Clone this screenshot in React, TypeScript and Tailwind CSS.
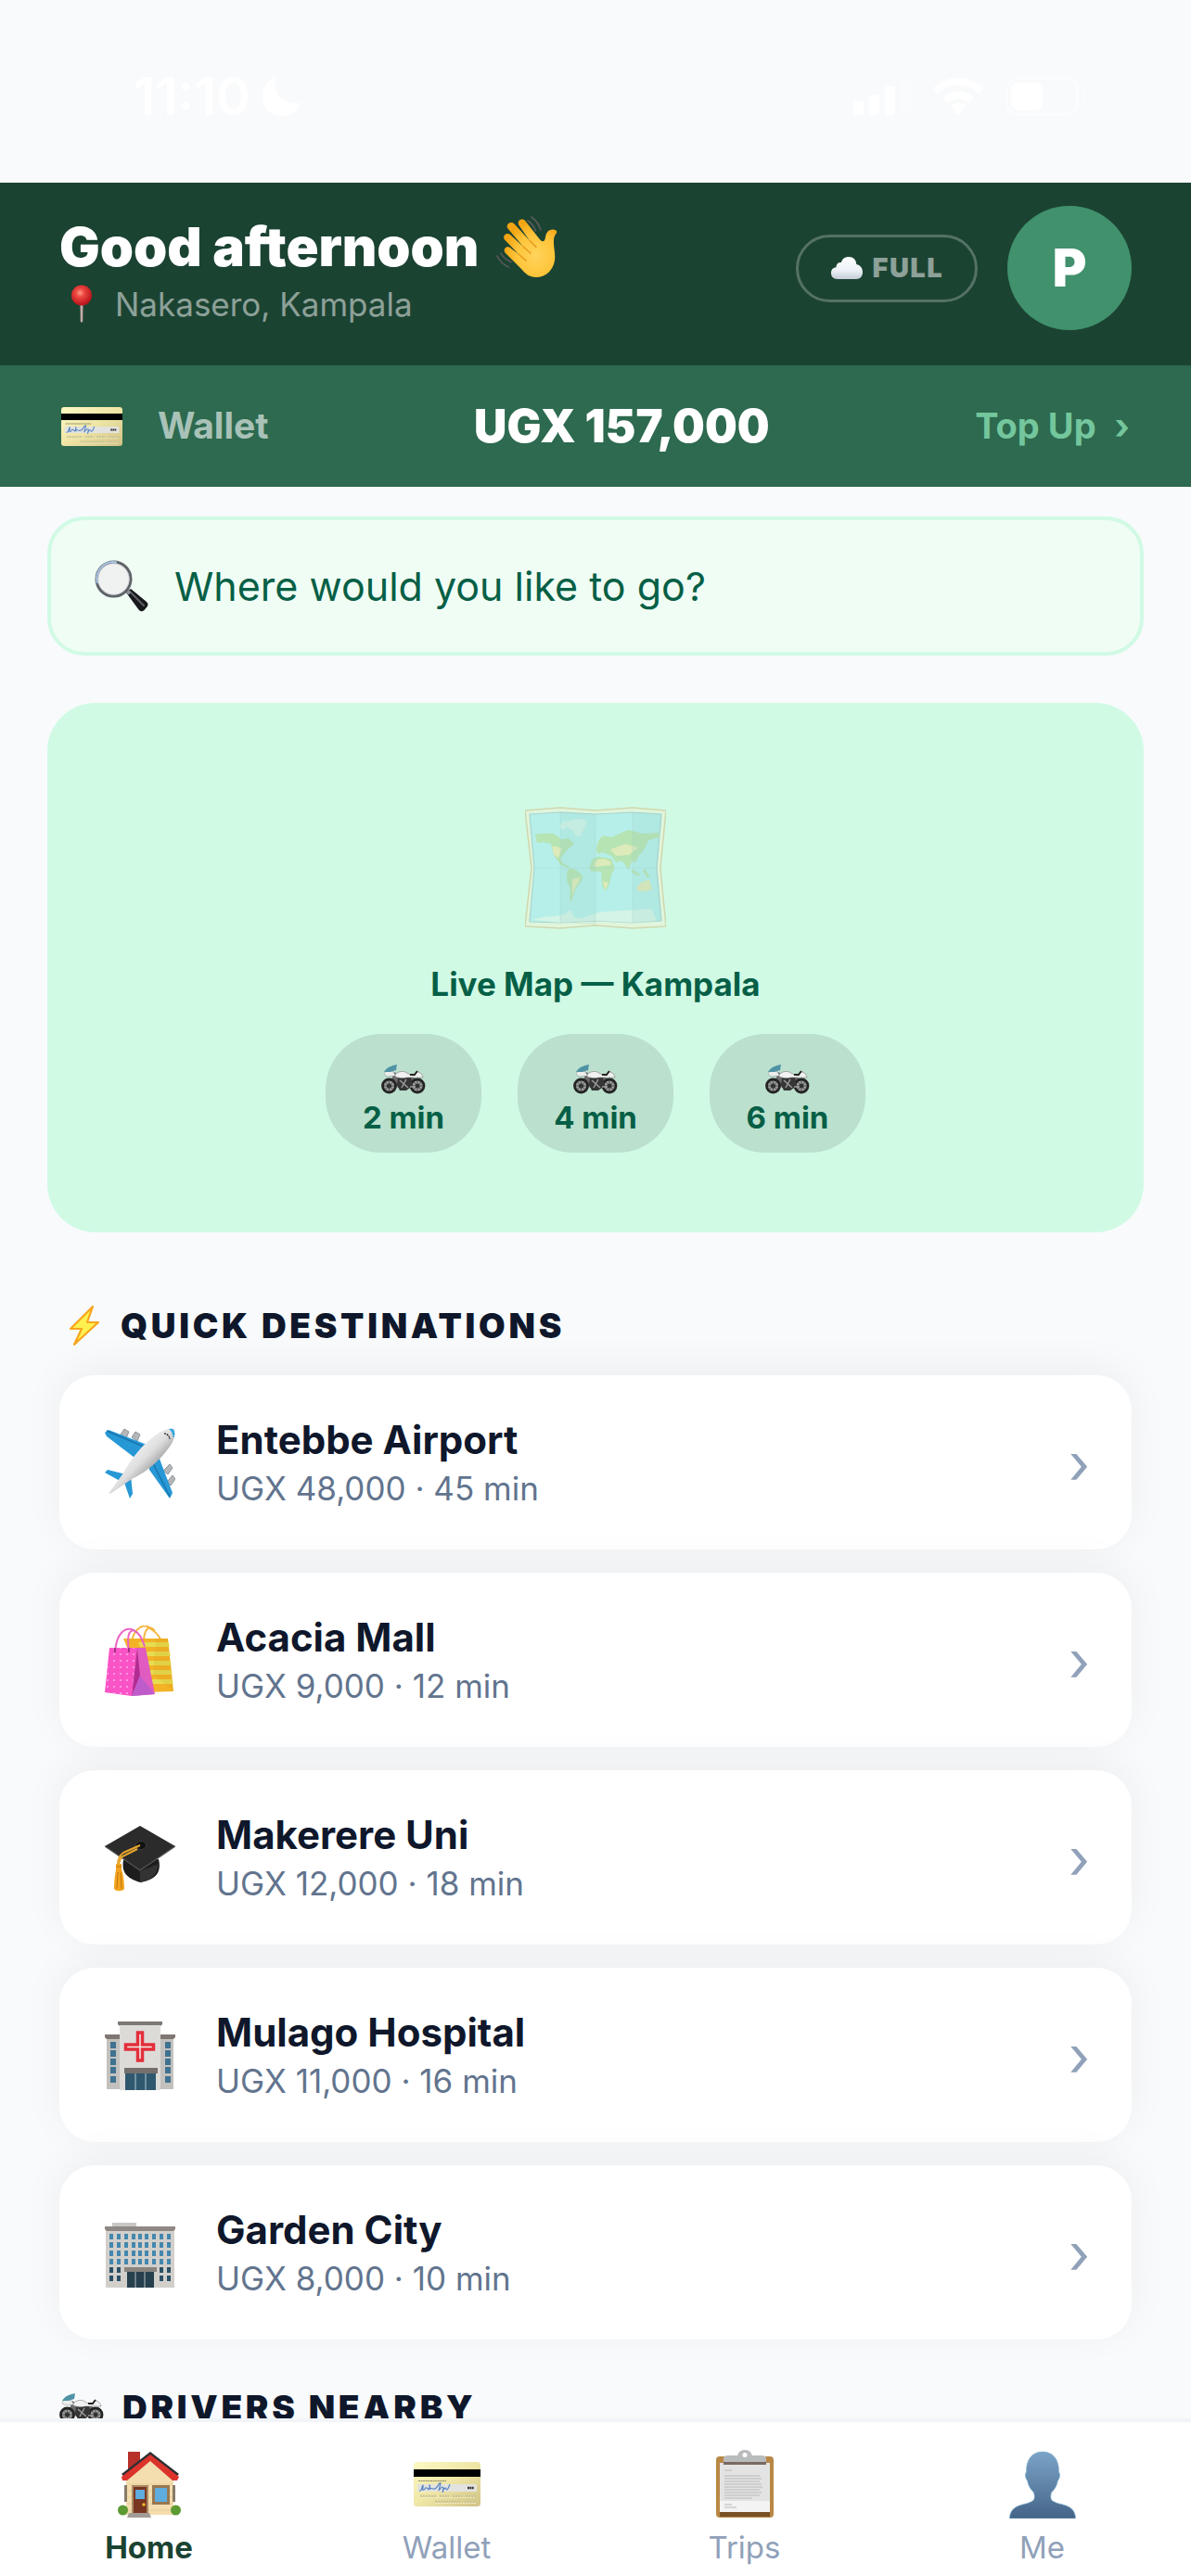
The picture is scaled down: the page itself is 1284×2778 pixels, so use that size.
import { useId, type ReactNode } from "react";

type IconProps = { className?: string };

function WaveIcon({ className }: IconProps) {
  const id = useId();
  return (
    <svg viewBox="0 0 68 68" className={className} aria-hidden="true">
      <defs>
        <radialGradient id={id} cx="0.6" cy="0.62" r="0.6">
          <stop offset="0" stopColor="#ffd35c" />
          <stop offset="0.6" stopColor="#ffc53a" />
          <stop offset="1" stopColor="#f3a413" />
        </radialGradient>
      </defs>
      <path
        fill={`url(#${id})`}
        d="M10 41c-3-3-0.500-8 4-6.500L24 42 9 26.500c-3-4 2-8.500 6-5.500L29 34 12.500 14.500c-3-4.500 3-9 7-5L36 27.500 24.500 11c-3-5 3.500-9 7-4.500L46 25c3 4 6 5 7-1 .8-5 3-8.500 8-8.500 3.500 0 5.500 2 3.500 4.500-2.500 3-2.500 6-2.500 10 0 6 2 12 1 19-2 11-10 18-20 18-7 0-12-4-16-9z"
      />
      <path d="M24 42l8 7M29 34l8 7M36 27.500l7 7" fill="none" stroke="#e79a1d" strokeWidth="1.500" strokeLinecap="round" />
      <path
        d="M38 2c4 3 8 8 10 14M34 6c3 2 7 6 8.500 11M5 41c2 4 7 8 11 9.500M0.800 44c3 6 8 10 12.500 12"
        fill="none"
        stroke="#5b5a5c"
        strokeWidth="1.600"
        strokeLinecap="round"
      />
    </svg>
  );
}

function PinIcon({ className }: IconProps) {
  const id = useId();
  return (
    <svg viewBox="0 0 24 42" className={className} aria-hidden="true">
      <defs>
        <radialGradient id={id} cx="0.42" cy="0.38" r="0.6">
          <stop offset="0" stopColor="#ff9a85" />
          <stop offset="0.350" stopColor="#ee4640" />
          <stop offset="1" stopColor="#b9151c" />
        </radialGradient>
      </defs>
      <path d="M10.300 20h3.400l-.4 20q-1.300 1.500-2.600 0z" fill="#a58d88" />
      <path d="M11.400 20h1v20h-1z" fill="#dccdc8" />
      <circle cx="12" cy="11.500" r="11" fill={`url(#${id})`} />
    </svg>
  );
}

function CloudIcon({ className }: IconProps) {
  const id = useId();
  return (
    <svg viewBox="0 0 36 26" className={className} aria-hidden="true">
      <defs>
        <linearGradient id={id} x1="0" y1="0" x2="0" y2="1">
          <stop offset="0" stopColor="#ffffff" />
          <stop offset="0.600" stopColor="#eef2f7" />
          <stop offset="1" stopColor="#c3ccd8" />
        </linearGradient>
      </defs>
      <path
        fill={`url(#${id})`}
        d="M8 25C3 25 1 22 1 18.500 1 15 3 12.500 6.500 12.300 6.500 8 9.500 6.500 12 7c1-4 4-6 8-6 5 0 8 3 8.300 8C32.500 10 35 13 35 17.500 35 22 32.500 25 28 25z"
      />
    </svg>
  );
}

function CardIcon({ className }: IconProps) {
  const id = useId();
  return (
    <svg viewBox="0 0 72 48" className={className} aria-hidden="true" preserveAspectRatio="none">
      <defs>
        <linearGradient id={id} x1="0" y1="0" x2="1" y2="1">
          <stop offset="0" stopColor="#fdf9c4" />
          <stop offset="0.500" stopColor="#efe6a6" />
          <stop offset="1" stopColor="#cfc285" />
        </linearGradient>
      </defs>
      <rect y="0" width="72" height="48" rx="3.500" fill={`url(#${id})`} />
      <rect y="8" width="72" height="8" fill="#000" />
      <path d="M5 20.500h30" stroke="#8d8663" strokeWidth="1.200" strokeDasharray="2 0.600" />
      <rect x="4" y="24" width="64" height="8" fill="#e2e3df" />
      <path
        d="M6 31c3 1 3-6 4-6 1 3-2 6 1 5 2-1 1-3 3-2s1 3 3 0c0-5 1-4 0 2 1-3 3-1 4-1 5 1 6-8 8-6l-2 8c2-3 4-5 5-3l-1 5c1-4 3-6 4-4 1 3 3-2 4-5"
        fill="none"
        stroke="#5b86c6"
        strokeWidth="1.200"
      />
      <path d="M58 28h7" stroke="#333" strokeWidth="2.500" strokeDasharray="1.900 0.500" />
      <path d="M7 37h17M28 37h10M42 37h10M56 37h11M23 43h28M55 43h12" stroke="#cdc495" strokeWidth="3" strokeDasharray="2 1" />
      <path d="M7 38.500h60M23 44.500h44" stroke="#fbf6cd" strokeWidth="0.800" strokeDasharray="2 1" />
    </svg>
  );
}

function SearchIcon({ className }: IconProps) {
  return (
    <svg viewBox="0 0 58 56" className={className} aria-hidden="true">
      <path d="M34 35l5-4 17 14c2 2 2 4 0 6l-2.500 3c-2 1.800-4 1.800-6-.5z" fill="#17181b" />
      <path d="M38 34l15 15" stroke="#5d6067" strokeWidth="2" strokeLinecap="round" />
      <path d="M33 32l5 4" stroke="#8d9098" strokeWidth="4" />
      <circle cx="20.500" cy="20.500" r="18.500" fill="#f0f2f2" stroke="#5f6368" strokeWidth="3" />
      <path d="M3 25A18 18 0 0 1 24 2.500" fill="none" stroke="#a9c6e8" strokeWidth="2" />
      <circle cx="20.500" cy="20.500" r="16.700" fill="none" stroke="#c4c8cc" strokeWidth="0.800" />
    </svg>
  );
}

function MapIcon({ className }: IconProps) {
  return (
    <svg viewBox="0 0 152 132" className={className} aria-hidden="true">
      <path d="M0 4L38 1l38 3 40-3 36 3-6 62 6 63-36 2-40-3-38 3-38-2 7-63z" fill="#f4efcf" stroke="#d0a45c" strokeWidth="1.500" />
      <path d="M5 8l33-2 38 2 40-2 31 2-5 58 5 57-31 2-40-2-38 2-33-1 5-58z" fill="#8fdff0" stroke="#6f9fae" strokeWidth="1.200" />
      <g fill="#f3f1e4">
        <path d="M46 16c8-4 14-3 20-1 2 5-4 9-6 17l-6-1c-1-6-5-6-8-8z" opacity="0.600" />
        <path d="M8 122c10-5 26-3 34-6l8-5 2 7c6 4 10 2 18-1 10-5 24-4 34-5l32-2 6 13-26 2-40-2-38 2z" opacity="0.700" />
        <path d="M36 22l6-7 8 2-8 8z" opacity="0.600" />
      </g>
      <g fill="#8fc46b">
        <path d="M11 30c8-2 14-1 20-1l8 6 8-1 6 6-8 7c-2 4-6 6-7 10l4 5 6 2-2 2-8-4-7-10-3-12-8-2-7 1z" />
        <path d="M47 67c6-2 12 4 15 8 0 8-8 10-9 19l-4 9c-2-8 1-12-1-17-4-7-4-12-1-19z" />
        <path d="M70 68c0-9 3-14 10-14l13 2c2 5 4 8 3 12-5 6-3 16-9 22-5-1-4-10-5-20-5-1-9 1-12-2z" />
        <path d="M77 47c0-7 3-12 7-16l9 2 18-8 16 4 17-1 1 5-12 3c-3 7-4 11-10 16l-4 8-4-1-3 9-8-10-6 2-5-7-9-4-5 2z" />
        <path d="M115 69l8 5M128 68l5 8" stroke="#8fc46b" strokeWidth="3" />
      </g>
      <g fill="#f0d47a">
        <path d="M30 42l10 3-4 10c-6-2-7-7-6-13z" />
        <path d="M51 78l8-2c0 8-6 8-8 22z" />
        <path d="M74 62c4-7 11-8 19-2l-1 3-17 2zM84 80l6 2-4 8z" />
        <path d="M92 46l16-6 14 4-10 8-14 1zM121 86c4-5 10-7 13-7l3 10-6 2-10 0z" />
      </g>
      <path d="M38 5l38 3v119l-38-2zM116 6l31 2-5 58 5 57-31 2z" fill="#2e6f86" opacity="0.150" />
      <path d="M38 5v120M76 7v119M116 6v119M9 66h133" stroke="#5e8f9c" strokeWidth="1" opacity="0.300" />
    </svg>
  );
}

function MotorbikeIcon({ className }: IconProps) {
  return (
    <svg viewBox="0 0 48 32" className={className} aria-hidden="true">
      <path d="M9 22L14 8l6 4 14-1 5 11-8 3H19z" fill="#6b6b6b" />
      <g fill="#9a9c9d" stroke="#242424" strokeWidth="2.800">
        <circle cx="8.500" cy="23" r="7" />
        <circle cx="39" cy="23" r="7" />
      </g>
      <g fill="none" stroke="#444" strokeWidth="0.800">
        <path d="M3 23h11M8.500 17.500v11M4.500 19l8 8M12.500 19l-8 8M33.500 23h11M39 17.500v11M35 19l8 8M43 19l-8 8" />
      </g>
      <circle cx="8.500" cy="23" r="2.600" fill="#333" />
      <circle cx="39" cy="23" r="2.600" fill="#333" />
      <path d="M18 14h14l2 9-7 5h-7l-3-6z" fill="#353535" />
      <path d="M20 17l9 8M27 16l-5 9M31 24h6" stroke="#9c9c9c" strokeWidth="1.500" />
      <path d="M3 11c0-3 4-5 9-4l4 5-9 1z" fill="#eceded" stroke="#888" strokeWidth="0.500" />
      <path d="M15 11c3-4 10-5 14-1l6 2 2-4 3 0c3 1 5 4 5 6l-17 0c-4 1-9 1-13-1z" fill="#f1f1f1" stroke="#777" strokeWidth="0.600" />
      <path d="M31 11l5 0 3-4" fill="none" stroke="#222" strokeWidth="1.800" />
      <path d="M3 8C6 3 11 1 17 0l-1 6-6 2z" fill="#4f93a5" />
    </svg>
  );
}

function BoltIcon({ className }: IconProps) {
  return (
    <svg viewBox="0 0 34 46" className={className} aria-hidden="true">
      <path d="M26 2L2 26h12L6 43l26-24H20z" fill="#fff04f" stroke="#f9a51e" strokeWidth="2.200" strokeLinejoin="round" />
    </svg>
  );
}

function PlaneIcon({ className }: IconProps) {
  const id = useId();
  return (
    <svg viewBox="0 0 76 76" className={className} aria-hidden="true">
      <defs>
        <linearGradient id={id} x1="0.300" y1="0.300" x2="0.700" y2="0.700">
          <stop offset="0" stopColor="#f5f5f5" />
          <stop offset="0.500" stopColor="#dedede" />
          <stop offset="1" stopColor="#8d8d8d" />
        </linearGradient>
      </defs>
      <g fill="#b4b7b9" stroke="#808487" strokeWidth="0.800">
        <path d="M17 7l4-6 5 3-3 7zM29 10l4-6 5 3-3 7zM63 46l7-7 3 4-5 7zM67 58l6-7 3 4-5 7z" />
      </g>
      <path d="M0 5l4-3 44 17-12 16L2 9z" fill="#2798d6" />
      <path d="M48 36l9-8 16 42-3 6L48 45z" fill="#2798d6" />
      <path d="M0 48l3-3 20 5-5 8zM20 56l8-5 2 20-3 5z" fill="#2798d6" />
      <path d="M2 3l42 18M70 74L52 38" stroke="#1974ad" strokeWidth="1.500" />
      <path d="M57 6c7-5 14-6 17-5 3 4 1 12-4 19C60 34 45 48 29 55L6 71c-2 0-1-2 0-3l13-18C28 33 42 16 57 6z" fill={`url(#${id})`} />
      <path d="M69 1c4-1 6 0 6 3 1 3 0 5-1 7-1-5-2-8-5-10z" fill="#36a8df" />
      <path d="M64 6c3 0 6 3 6 6" fill="none" stroke="#3a3a3a" strokeWidth="1.500" strokeDasharray="2 0.800" />
    </svg>
  );
}

function BagsIcon({ className }: IconProps) {
  const id = useId();
  return (
    <svg viewBox="0 0 76 76" className={className} aria-hidden="true">
      <defs>
        <pattern id={id} width="7" height="7" patternUnits="userSpaceOnUse">
          <circle cx="3" cy="3" r="1.100" fill="#ffa6e6" />
        </pattern>
      </defs>
      <path d="M28 20C32 0 44-3 50 4c5 3 9 8 11 13M42 18C42 4 48-2 54 6" fill="none" stroke="#f3b73e" strokeWidth="2" />
      <path d="M20 14h48l6 57-30 1z" fill="#f4b326" />
      <path d="M36 18h33l.6 5H38zM40 28h30l.6 5H42zM44 38h27l.6 5H46zM46 48h26l.6 5H48zM48 58h25l.6 5H50z" fill="#e6dd51" />
      <path d="M55 14h13l6 57-22-18z" fill="#c98a12" opacity="0.150" />
      <path d="M5 24h30l-6 52-29-4z" fill="#f953c6" />
      <path d="M5 24h30l-6 52-29-4z" fill={`url(#${id})`} />
      <path d="M35 24h9l10 50-25 2z" fill="#e05cc0" />
      <path d="M35 24l3 30-9 22z" fill="#b32c93" />
      <path d="M38 54l16 20-25 2z" fill="#bf5ccb" />
      <path d="M11 30C12 8 22 1 31 5c6 3 10 10 12 18M26 30C24 12 25 5 32 5" fill="none" stroke="#ec65c3" strokeWidth="2" />
      <path d="M11 29v-5M26 29v-5" stroke="#8f2375" strokeWidth="1.500" />
    </svg>
  );
}

function CapIcon({ className }: IconProps) {
  return (
    <svg viewBox="0 0 76 76" className={className} aria-hidden="true">
      <path d="M20 40l38-1c3 12-1 22-20 25C22 59 18 52 20 40z" fill="#1d1d1d" />
      <path d="M38 64c12-2 18-8 20-20L38 52z" fill="#333" />
      <path d="M0 25L38 3l38 22-38 26z" fill="#2b2b2b" />
      <path d="M0 25l38 26 38-26" fill="none" stroke="#555" strokeWidth="1.200" />
      <ellipse cx="39" cy="24" rx="5.500" ry="4.500" fill="#111" stroke="#444" strokeWidth="0.800" />
      <path d="M38 24L20 32q-6 4-6 13M35 28l-16 8q-3 3-4 9" fill="none" stroke="#e8a62e" strokeWidth="2" />
      <path d="M12 44h6v6c2 5 3 14 3 21-2 3-9 3-11 0 0-8 1-16 2-21z" fill="#f2a41f" />
      <path d="M12 47h6M14 53l-1 18M17 53l1 18" stroke="#c4760f" strokeWidth="1" />
    </svg>
  );
}

function HospitalIcon({ className }: IconProps) {
  return (
    <svg viewBox="0 0 76 76" className={className} aria-hidden="true">
      <path d="M2 18h72v56H2z" fill="#c3c1bd" />
      <path d="M0 15h76v3l-2 2H2l-2-2zM14 1h48v3l-2 2H16l-2-2z" fill="#7e7875" />
      <path d="M16 5h44v70H16z" fill="#dddbd8" />
      <path d="M6 23h6v7H6zM6 32h6v7H6zM6 41h6v7H6zM6 50h6v7H6zM6 60h6v7H6zM65 23h6v7h-6zM65 32h6v7h-6zM65 41h6v7h-6zM65 50h6v7h-6zM65 60h6v7h-6z" fill="#3f7291" />
      <path d="M35.500 13h5v13h12v5h-12v12h-5V31h-13v-5h13z" fill="#f2f0ee" stroke="#e22f3c" strokeWidth="3.500" />
      <path d="M21 51h36v6H21z" fill="#756f6c" />
      <path d="M22 57h33v18H22z" fill="#2f586f" />
      <path d="M33 57v18M44 57v18" stroke="#87a5b3" strokeWidth="1.500" />
    </svg>
  );
}

function OfficeIcon({ className }: IconProps) {
  const xs = [5, 13, 21, 29, 36, 43, 51, 59, 67];
  const ys = [17, 26, 35, 44, 53, 62];
  return (
    <svg viewBox="0 0 76 76" className={className} aria-hidden="true">
      <path d="M8 5h26v5H8z" fill="#c9c7c4" />
      <path d="M1 12h74v63H1z" fill="#d2cfcb" />
      <path d="M0 9h76v3l-2 2H2l-2-2z" fill="#8f8985" />
      {ys.map((y, row) =>
        xs
          .filter((x) => row < 4 || x < 20 || x > 55)
          .map((x) => <rect key={`${x}-${y}`} x={x} y={y} width="4" height="6" fill={row < 4 ? "#4488ae" : "#2a4f66"} />),
      )}
      <path d="M21 53h35v5H21z" fill="#8a8480" />
      <path d="M24 58h29v17H24z" fill="#26404e" />
      <path d="M33 58v17M43 58v17" stroke="#87979f" strokeWidth="1.500" />
    </svg>
  );
}

function HomeIcon({ className }: IconProps) {
  return (
    <svg viewBox="0 0 68 72" className={className} aria-hidden="true">
      <path d="M11 1h13v18l-13 9z" fill="#b8302a" />
      <path d="M9 28L35 6l25 22v41H9z" fill="#f4ddae" />
      <path d="M10 36h49M10 43h49M10 50h49M10 57h49M10 64h49" stroke="#e5ca98" strokeWidth="0.800" />
      <path d="M4 25L35 1l31 24-3 3L35 6 7 28z" fill="#2e2e33" />
      <path d="M4 28L35 4l31 24-2 4h-5L35 11 10 32H5z" fill="#dc332b" />
      <circle cx="5.500" cy="64" r="5.500" fill="#5c9a34" />
      <circle cx="62.500" cy="64" r="5.500" fill="#5c9a34" />
      <path d="M7 37h3v18H7zM59 37h3v18h-3z" fill="#887a69" />
      <path d="M15 37h18v32H15z" fill="#a98a65" />
      <path d="M17 39h14v30H17z" fill="#793620" />
      <path d="M19 42h10v10H19zM40 40h14v16H40z" fill="#5facdf" />
      <path d="M38.500 38.500h16v18h-16z" fill="none" stroke="#987751" strokeWidth="3" />
      <circle cx="28" cy="58" r="1.800" fill="#f2b52c" />
      <path d="M12 67h22l2 5H10z" fill="#a39c96" />
    </svg>
  );
}

function ClipboardIcon({ className }: IconProps) {
  return (
    <svg viewBox="0 0 64 74" className={className} aria-hidden="true">
      <rect x="1" y="7" width="62" height="66" rx="4" fill="#b98845" />
      <rect x="5" y="14" width="54" height="53" fill="#e3e3e3" />
      <path d="M5 55h54v12H5z" fill="#f3f3f3" />
      <path d="M5 67h54v5H5z" fill="#7a5126" />
      <path d="M9 9c0-2 2-3 5-3h10c1-2 2-6 8-6s7 4 8 6h10c3 0 5 1 5 3v6H9z" fill="#b9bbbd" />
      <path d="M9 13h46v3H9z" fill="#7a6a64" />
      <circle cx="32" cy="5.500" r="2.500" fill="#fff" />
      <path
        d="M10 22h8M10 28h38M10 31h40M10 34h38M10 37h40M10 40h41M10 43h38M10 46h40M10 49h38M10 52h30M10 59h8M10 62h13"
        stroke="#bababa"
        strokeWidth="1.100"
      />
    </svg>
  );
}

function PersonIcon({ className }: IconProps) {
  const id = useId();
  return (
    <svg viewBox="0 0 72 73" className={className} aria-hidden="true">
      <defs>
        <linearGradient id={id} x1="0" y1="0" x2="0" y2="1">
          <stop offset="0" stopColor="#7ba4c8" />
          <stop offset="1" stopColor="#446488" />
        </linearGradient>
      </defs>
      <path
        fill={`url(#${id})`}
        stroke="#7db4d0"
        strokeWidth="0.600"
        d="M36 1C47 1 54 9 53.500 23c2 2 1 7-1 9-1 6-4 10-7 13-1 3-1 6 0 8 4 4 12 4 18 7 6 3 8 8 8 13H.5c0-5 2-10 8-13 6-3 14-3 18-7 1-2 1-5 0-8-3-3-6-7-7-13-2-2-3-7-1-9C18 9 25 1 36 1z"
      />
    </svg>
  );
}

function StatusBar() {
  return (
    <div className="flex h-[197px] shrink-0 items-start justify-between pl-36 pr-28 pt-[78px] text-white">
      <div className="flex items-center gap-3">
        <span className="text-[56px] font-semibold leading-[52px]">11:10</span>
        <svg viewBox="0 0 44 44" className="size-11 fill-white" aria-label="Focus on">
          <path d="M15 1C11 17 22 32 43 29 39 38 31 43 22 43 10 43 1 34 1 22 1 12 7 4 15 1z" />
        </svg>
      </div>
      <div className="flex h-[52px] items-center gap-6">
        <svg viewBox="0 0 62 40" className="h-10 w-[62px] fill-white" aria-label="Signal">
          <rect y="25" width="11" height="15" rx="3" />
          <rect x="17" y="18" width="11" height="22" rx="3" />
          <rect x="34" y="9" width="11" height="31" rx="3" />
          <rect x="51" y="1" width="11" height="39" rx="3" opacity="0.300" />
        </svg>
        <svg viewBox="0 0 54 40" className="h-10 w-[54px] fill-white" aria-label="Wi-Fi">
          <path d="M0 11C15-4 39-4 54 11l-5 6C37 5 17 5 5 17z" />
          <path d="M10 21c10-9 24-9 34 0l-5 6c-7-6-17-6-24 0z" />
          <path d="M19 30c5-4 11-4 16 0l-8 10z" />
        </svg>
        <svg viewBox="0 0 88 42" className="h-[42px] w-[88px] fill-white" aria-label="Battery">
          <rect x="1.500" y="1.500" width="76" height="39" rx="12" fill="none" stroke="white" strokeWidth="3" opacity="0.400" />
          <rect x="6" y="6" width="34" height="30" rx="8" />
          <path d="M83 15q8 6 0 12z" opacity="0.400" />
        </svg>
      </div>
    </div>
  );
}

function SectionTitle({ icon, children }: { icon: ReactNode; children: ReactNode }) {
  return (
    <h2 className="flex items-center gap-5 px-16 text-[37px] font-black leading-[48px] tracking-widest text-slate-900">
      {icon}
      {children}
    </h2>
  );
}

const destinations = [
  { name: "Entebbe Airport", detail: "UGX 48,000 · 45 min", Icon: PlaneIcon },
  { name: "Acacia Mall", detail: "UGX 9,000 · 12 min", Icon: BagsIcon },
  { name: "Makerere Uni", detail: "UGX 12,000 · 18 min", Icon: CapIcon },
  { name: "Mulago Hospital", detail: "UGX 11,000 · 16 min", Icon: HospitalIcon },
  { name: "Garden City", detail: "UGX 8,000 · 10 min", Icon: OfficeIcon },
];

const tabs = [
  { label: "Home", Icon: HomeIcon, size: "h-[72px] w-[68px]", active: true },
  { label: "Wallet", Icon: CardIcon, size: "h-12 w-[72px]", active: false },
  { label: "Trips", Icon: ClipboardIcon, size: "h-[74px] w-16", active: false },
  { label: "Me", Icon: PersonIcon, size: "h-[73px] w-[72px]", active: false },
];

export default function App() {
  return (
    <div className="flex h-screen flex-col overflow-hidden bg-slate-50 font-['Inter',sans-serif]">
      <StatusBar />

      <header className="flex h-[197px] shrink-0 items-start justify-between bg-[#1b4332] px-16 pt-[25px]">
        <div className="pt-2">
          <h1 className="flex items-center gap-[18px] text-[58px] font-black leading-[72px] text-white">
            Good afternoon
            <WaveIcon className="size-[68px]" />
          </h1>
          <p className="flex items-center text-[35px] leading-[52px] text-white/50">
            <PinIcon className="mx-3 h-[42px] w-6" />
            <span className="pl-3">Nakasero, Kampala</span>
          </p>
        </div>
        <div className="flex items-center gap-8">
          <button type="button" className="flex h-[73px] items-center gap-2.5 rounded-full border-[3px] border-white/25 px-[34px] text-[29px] font-black tracking-wider text-white/50">
            <CloudIcon className="h-[26px] w-9" />
            FULL
          </button>
          <button type="button" aria-label="Profile" className="flex size-[134px] items-center justify-center rounded-full bg-[#40916c] text-[56px] font-black text-white">
            P
          </button>
        </div>
      </header>

      <section aria-label="Wallet" className="flex h-[131px] shrink-0 items-center justify-between bg-[#2d6a4f] px-[66px]">
        <div className="flex items-center gap-[38px] text-[39px] font-bold text-white/60">
          <CardIcon className="h-[42px] w-[66px]" />
          Wallet
        </div>
        <p className="text-[49px] font-black text-white">UGX 157,000</p>
        <button type="button" className="flex items-center gap-5 text-[38px] font-bold text-[#74c69d]">
          Top Up <span aria-hidden="true">›</span>
        </button>
      </section>

      <main className="min-h-0 flex-1 overflow-y-auto pt-8 [scrollbar-width:none]">
        <label className="mx-[51px] flex h-[150px] items-center gap-7 rounded-[40px] border-4 border-[#d1fae5] bg-[#f0fdf4] px-[47px]">
          <SearchIcon className="h-14 w-[58px] shrink-0" />
          <input
            type="text"
            aria-label="Destination"
            placeholder="Where would you like to go?"
            className="w-full bg-transparent text-[43px] text-[#065f46] outline-none placeholder:text-[#065f46]"
          />
        </label>

        <section aria-label="Live map" className="mx-[51px] mt-[51px] flex h-[571px] flex-col items-center rounded-[52px] bg-[#d1fae5] pt-28 text-[#065f46]">
          <MapIcon className="h-[132px] w-[152px] opacity-40" />
          <h2 className="mt-[37px] text-[35px] font-bold leading-[44px]">Live Map — Kampala</h2>
          <ul className="mt-8 flex gap-[39px]">
            {[2, 4, 6].map((minutes) => (
              <li key={minutes} className="flex h-32 w-[168px] flex-col items-center rounded-[60px] bg-black/10 pt-[33px]">
                <MotorbikeIcon className="h-8 w-12" />
                <span className="mt-1 text-[33px] font-bold leading-[42px]">{minutes} min</span>
              </li>
            ))}
          </ul>
        </section>

        <section className="mt-[77px]">
          <SectionTitle icon={<BoltIcon className="ml-2 h-[46px] w-[38px]" />}>QUICK DESTINATIONS</SectionTitle>
          <ul className="mx-16 mt-[29px] flex flex-col gap-[25px]">
            {destinations.map(({ name, detail, Icon }) => (
              <li key={name} className="rounded-[38px] bg-white shadow-[0_-8px_44px_rgba(0,0,0,0.050)]">
                <button type="button" className="flex h-[188px] w-full items-center gap-11 pl-[49px] pr-[45px] pt-0.5 text-left">
                  <Icon className="size-[76px]" />
                  <span className="flex flex-1 flex-col">
                    <span className="text-[42px] font-bold leading-[54px] text-slate-900">{name}</span>
                    <span className="text-[35px] leading-[50px] text-slate-500">{detail}</span>
                  </span>
                  <span aria-hidden="true" className="text-[60px] text-slate-400">
                    ›
                  </span>
                </button>
              </li>
            ))}
          </ul>
        </section>

        <section className="mt-[50px]">
          <SectionTitle icon={<MotorbikeIcon className="h-8 w-12" />}>DRIVERS NEARBY</SectionTitle>
        </section>
      </main>

      <nav aria-label="Main" className="grid h-[170px] shrink-0 grid-cols-4 border-t-4 border-slate-100 bg-white">
        {tabs.map(({ label, Icon, size, active }) => (
          <a
            key={label}
            href={`#${label.toLowerCase()}`}
            aria-current={active ? "page" : undefined}
            className={`flex flex-col items-center pt-[30px] text-[33px] leading-[42px] ${active ? "font-bold text-[#1b4332]" : "text-slate-400"}`}
          >
            <span className="mb-2.5 flex h-[74px] items-center">
              <Icon className={size} />
            </span>
            {label}
          </a>
        ))}
      </nav>
    </div>
  );
}
